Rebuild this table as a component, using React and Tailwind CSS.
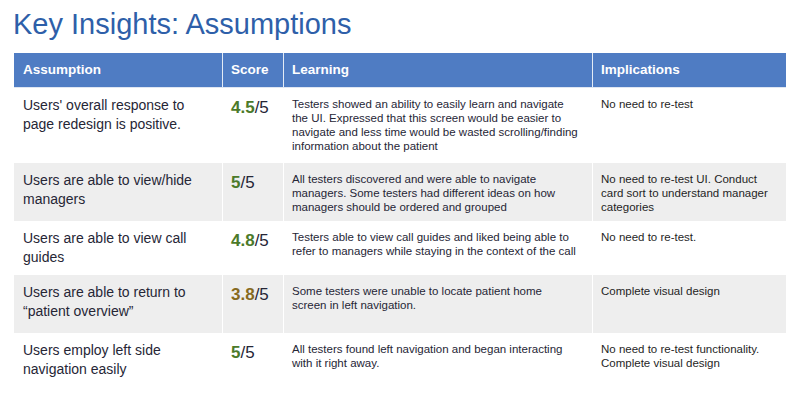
const rows = [
  {
    assumption: "Users' overall response to page redesign is positive.",
    score: "4.5",
    tone: "text-[#4c7a2a]",
    learning: [
      "Testers showed an ability to easily learn and navigate",
      "the UI. Expressed that this screen would be easier to",
      "navigate and less time would be wasted scrolling/finding",
      "information about the patient",
    ],
    implications: "No need to re-test",
    h: "h-[75px]",
    gray: false,
  },
  {
    assumption: "Users are able to view/hide managers",
    score: "5",
    tone: "text-[#4c7a2a]",
    learning: [
      "All testers discovered and were able to navigate",
      "managers. Some testers had different ideas on how",
      "managers should be ordered and grouped",
    ],
    implications: "No need to re-test UI. Conduct card sort to understand manager categories",
    h: "h-[58px]",
    gray: true,
  },
  {
    assumption: "Users are able to view call guides",
    score: "4.8",
    tone: "text-[#4c7a2a]",
    learning: [
      "Testers able to view call guides and liked being able to",
      "refer to managers while staying in the context of the call",
    ],
    implications: "No need to re-test.",
    h: "h-[54px]",
    gray: false,
  },
  {
    assumption: "Users are able to return to \u201cpatient overview\u201d",
    score: "3.8",
    tone: "text-[#876a1e]",
    learning: [
      "Some testers were unable to locate patient home",
      "screen in left navigation.",
    ],
    implications: "Complete visual design",
    h: "h-[58px]",
    gray: true,
  },
  {
    assumption: "Users employ left side navigation easily",
    score: "5",
    tone: "text-[#4c7a2a]",
    learning: [
      "All testers found left navigation and began interacting",
      "with it right away.",
    ],
    implications: "No need to re-test functionality. Complete visual design",
    h: "h-[62px]",
    gray: false,
  },
];

export default function App() {
  return (
    <div className="w-[800px] h-[420px] bg-white overflow-hidden font-['Liberation_Sans',Arial,sans-serif]">
      <h1 className="pl-[13px] pt-[6px] h-[53px] text-[29px] leading-[36px] text-[#2e5fa9]">
        Key Insights: Assumptions
      </h1>

      <div className="ml-[14px] w-[772px]">
        {/* header */}
        <div className="grid grid-cols-[208px_61px_309px_194px] h-[35px] bg-[#4f7cc3] text-white font-bold text-[13.5px] border-b border-[#dfe6f2]">
          <div className="pl-[9px] flex items-center">Assumption</div>
          <div className="px-2 flex items-center border-l border-[#e4ebf5]">Score</div>
          <div className="px-2 flex items-center border-l border-[#e4ebf5]">Learning</div>
          <div className="px-2 flex items-center border-l border-[#e4ebf5]">Implications</div>
        </div>

        {rows.map((r, i) => (
          <div
            key={i}
            className={`grid grid-cols-[208px_61px_309px_194px] ${r.h} ${r.gray ? "bg-[#eeeeee]" : "bg-white"}`}
          >
            <div className="pl-[9px] pr-2 pt-[8px] text-[14px] leading-[19px] text-[#262636]">
              {r.assumption}
            </div>
            <div className="px-2 pt-[10px] text-[17px] leading-[20px] text-[#262636] border-l border-white">
              <span className={`font-bold ${r.tone}`}>{r.score}</span>/5
            </div>
            <div className="px-2 pt-[9px] text-[11.5px] leading-[14px] text-[#262636] border-l border-white">
              {r.learning.map((line, j) => (
                <div key={j} className="whitespace-nowrap">{line}</div>
              ))}
            </div>
            <div className="px-2 pt-[9px] text-[11.5px] leading-[14px] text-[#1f1f1f] border-l border-white">
              {r.implications}
            </div>
          </div>
        ))}
      </div>
    </div>
  );
}
